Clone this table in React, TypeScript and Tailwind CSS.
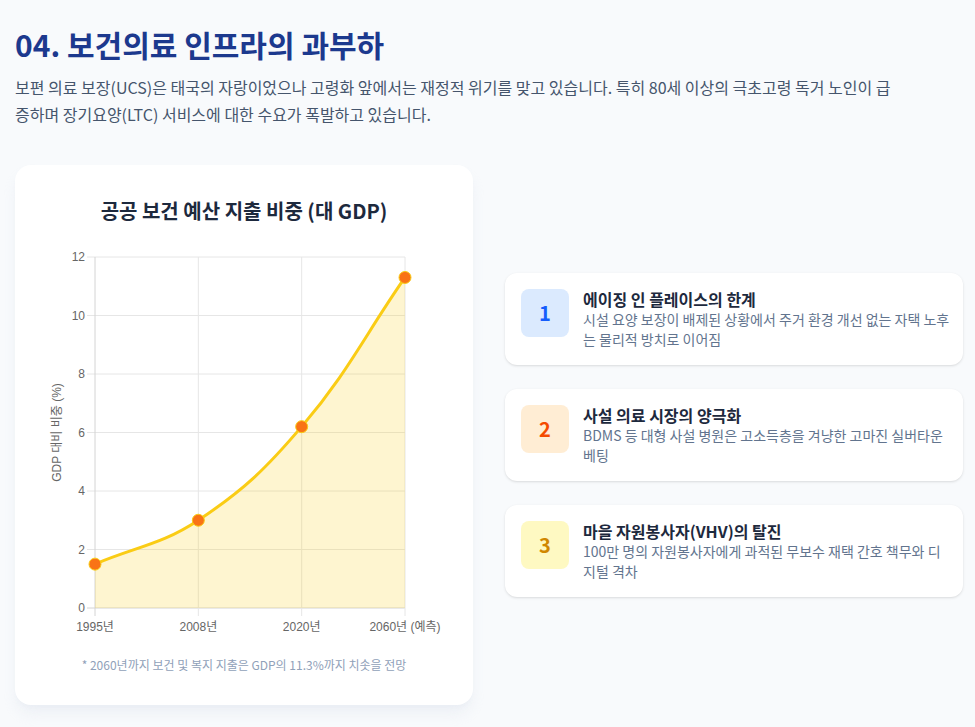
const values = [1.5, 3.0, 6.2, 11.3];
const labels = ["1995년", "2008년", "2020년", "2060년 (예측)"];

// chart area inside the svg
const left = 48;
const right = 358;
const top = 16;
const bottom = 367;
const yMax = 12;

type Pt = { x: number; y: number };

function buildCurve(pts: Pt[], t = 0.4) {
  const cps = pts.map((cur, i) => {
    const prev = pts[i - 1] ?? cur;
    const next = pts[i + 1] ?? cur;
    const d01 = Math.hypot(cur.x - prev.x, cur.y - prev.y);
    const d12 = Math.hypot(next.x - cur.x, next.y - cur.y);
    const s01 = d01 + d12 === 0 ? 0 : d01 / (d01 + d12);
    const s12 = d01 + d12 === 0 ? 0 : d12 / (d01 + d12);
    return {
      inX: cur.x - t * s01 * (next.x - prev.x),
      inY: cur.y - t * s01 * (next.y - prev.y),
      outX: cur.x + t * s12 * (next.x - prev.x),
      outY: cur.y + t * s12 * (next.y - prev.y),
    };
  });
  let d = `M ${pts[0].x} ${pts[0].y}`;
  for (let i = 1; i < pts.length; i++) {
    d += ` C ${cps[i - 1].outX} ${cps[i - 1].outY} ${cps[i].inX} ${cps[i].inY} ${pts[i].x} ${pts[i].y}`;
  }
  return d;
}

function SpendingChart() {
  const step = (right - left) / (values.length - 1);
  const pts = values.map((v, i) => ({
    x: left + i * step,
    y: bottom - (v / yMax) * (bottom - top),
  }));
  const line = buildCurve(pts);
  const area = `${line} L ${right} ${bottom} L ${left} ${bottom} Z`;
  const yTicks = [0, 2, 4, 6, 8, 10, 12];

  return (
    <svg
      width="395"
      height="400"
      viewBox="0 0 395 400"
      className="block"
      style={{ fontFamily: '"Liberation Sans", "Noto Sans CJK KR", sans-serif' }}
    >
      {/* horizontal grid + y ticks */}
      {yTicks.map((v) => {
        const y = bottom - (v / yMax) * (bottom - top);
        return (
          <g key={v}>
            <line x1={left - 8} x2={right} y1={y} y2={y} stroke={v === 0 ? "#d4d4d4" : "#e6e6e6"} strokeWidth="1" />
            <text x={left - 10} y={y + 4} textAnchor="end" fontSize="12" fill="#666">
              {v}
            </text>
          </g>
        );
      })}
      {/* vertical grid + x ticks */}
      {labels.map((l, i) => {
        const x = left + i * step;
        return (
          <g key={l}>
            <line x1={x} x2={x} y1={top} y2={bottom + 8} stroke={i === 0 ? "#d4d4d4" : "#e6e6e6"} strokeWidth="1" />
            <text x={x} y={390} textAnchor="middle" fontSize="12" fill="#666">
              {l}
            </text>
          </g>
        );
      })}
      <text
        transform={`translate(14 ${(top + bottom) / 2}) rotate(-90)`}
        textAnchor="middle"
        fontSize="12"
        fill="#666"
      >
        GDP 대비 비중 (%)
      </text>

      <path d={area} fill="rgba(250,204,21,0.2)" />
      <path d={line} fill="none" stroke="#facc15" strokeWidth="3" />
      {pts.map((p, i) => (
        <circle key={i} cx={p.x} cy={p.y} r="6" fill="#f97316" stroke="#facc15" strokeWidth="1" />
      ))}
    </svg>
  );
}

const issues = [
  {
    n: "1",
    badge: "bg-blue-100 text-blue-600",
    title: "에이징 인 플레이스의 한계",
    desc: "시설 요양 보장이 배제된 상황에서 주거 환경 개선 없는 자택 노후는 물리적 방치로 이어짐",
  },
  {
    n: "2",
    badge: "bg-orange-100 text-orange-600",
    title: "사설 의료 시장의 양극화",
    desc: "BDMS 등 대형 사설 병원은 고소득층을 겨냥한 고마진 실버타운 베팅",
  },
  {
    n: "3",
    badge: "bg-yellow-100 text-yellow-600",
    title: "마을 자원봉사자(VHV)의 탈진",
    desc: "100만 명의 자원봉사자에게 과적된 무보수 재택 간호 책무와 디지털 격차",
  },
];

export default function App() {
  return (
    <div
      className="min-h-screen bg-slate-50 pl-[15px] pr-3 pt-[26px] pb-6"
      style={{ fontFamily: '"Noto Sans CJK KR", "Noto Sans", sans-serif' }}
    >
      <h1 className="text-3xl font-bold text-blue-900">04. 보건의료 인프라의 과부하</h1>
      <p className="mt-3 max-w-[880px] text-base leading-[27px] text-slate-600">
        보편 의료 보장(UCS)은 태국의 자랑이었으나 고령화 앞에서는 재정적 위기를 맞고 있습니다. 특히 80세 이상의 극초고령 독거 노인이 급증하며 장기요양(LTC) 서비스에 대한 수요가 폭발하고 있습니다.
      </p>

      <div className="mt-[37px] grid grid-cols-2 gap-8">
        <div className="rounded-2xl bg-white p-8 shadow-lg shadow-slate-200/60">
          <h2 className="text-center text-xl font-bold text-slate-800">공공 보건 예산 지출 비중 (대 GDP)</h2>
          <div className="mt-4 h-[400px]">
            <SpendingChart />
          </div>
          <p className="mt-4 text-center text-xs text-slate-400">
            * 2060년까지 보건 및 복지 지출은 GDP의 11.3%까지 치솟을 전망
          </p>
        </div>

        <div className="flex flex-col justify-center gap-6">
          {issues.map((it) => (
            <div key={it.n} className="flex items-start gap-[14px] rounded-xl bg-white py-4 pl-4 pr-2.5 shadow-sm">
              <div
                className={`flex h-12 w-12 shrink-0 items-center justify-center rounded-lg text-xl font-bold ${it.badge}`}
              >
                {it.n}
              </div>
              <div>
                <h3 className="text-base font-bold leading-5 text-slate-800">{it.title}</h3>
                <p className="text-sm leading-5 text-slate-500">{it.desc}</p>
              </div>
            </div>
          ))}
        </div>
      </div>
    </div>
  );
}
